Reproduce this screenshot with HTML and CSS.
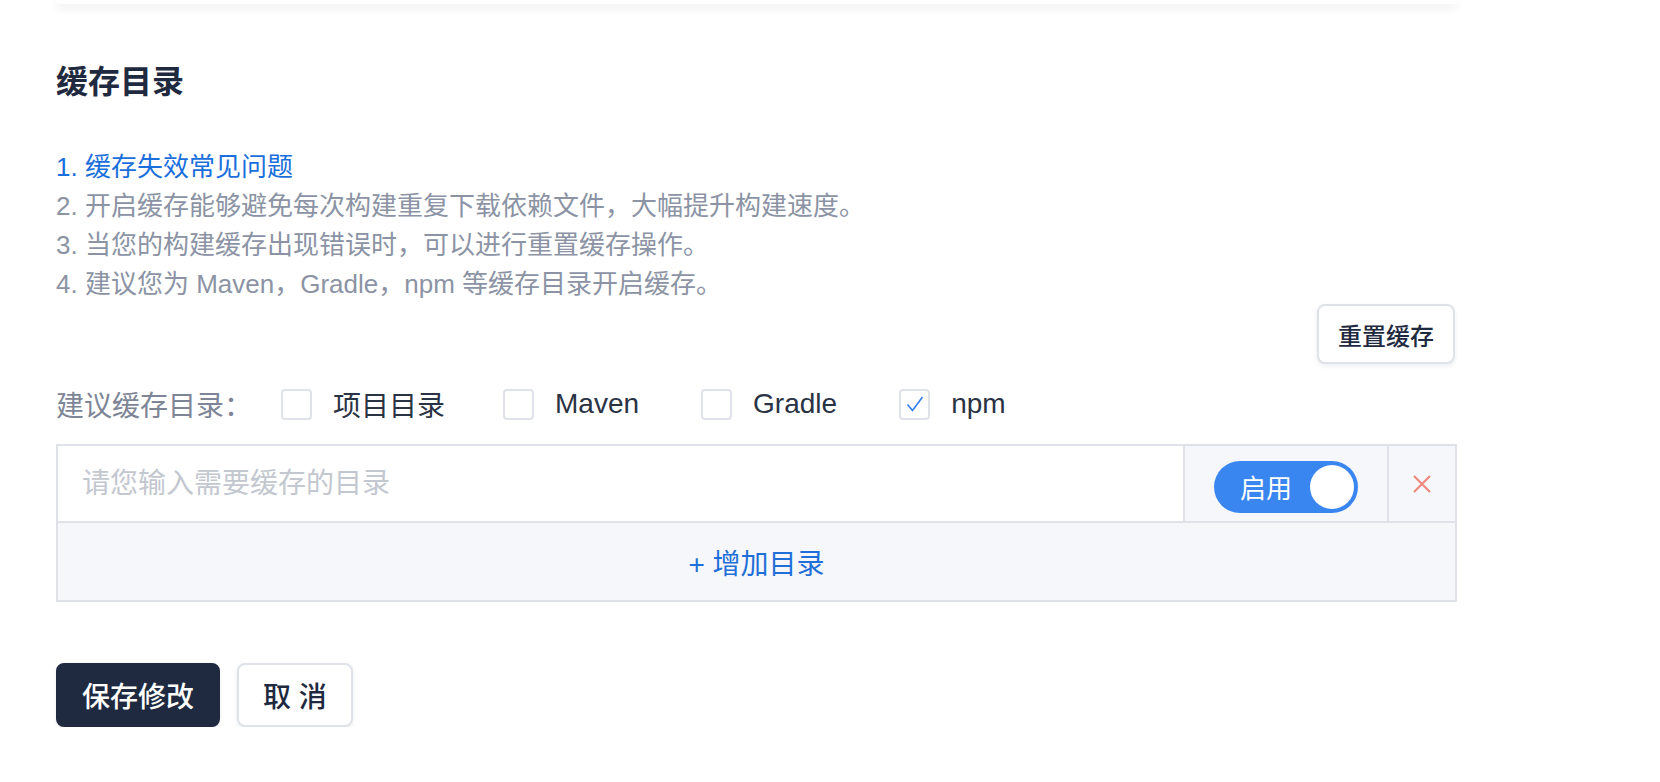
FILE: index.html
```html
<!DOCTYPE html>
<html lang="zh-CN">
<head>
  <meta charset="UTF-8">
  <title>缓存目录</title>
  <link rel="stylesheet" href="styles.css">
</head>
<body>

  <div class="page">
    <div class="top-card"></div>

    <section class="cache">
      <h2 class="section-title">缓存目录</h2>

      <div class="tips">
        <a class="tip tip-link" href="#">1. 缓存失效常见问题</a>
        <div class="tip">2. 开启缓存能够避免每次构建重复下载依赖文件，大幅提升构建速度。</div>
        <div class="tip">3. 当您的构建缓存出现错误时，可以进行重置缓存操作。</div>
        <div class="tip">4. 建议您为 Maven，Gradle，npm 等缓存目录开启缓存。</div>
      </div>

      <div class="reset-row">
        <button class="btn btn-plain btn-small">重置缓存</button>
      </div>

      <div class="suggest">
        <span class="suggest-label">建议缓存目录：</span>
        <label class="check"><span class="box"></span>项目目录</label>
        <label class="check check-wide"><span class="box"></span>Maven</label>
        <label class="check check-wide"><span class="box"></span>Gradle</label>
        <label class="check checked">
          <span class="box">
            <svg width="20" height="18" viewBox="0 0 20 18"><path d="M2.5 9.5 L7.5 15.5 L17.5 2" fill="none" stroke="#2f7ff0" stroke-width="1.6"/></svg>
          </span>npm
        </label>
      </div>

      <div class="dir-table">
        <div class="dir-row">
          <input class="dir-input" type="text" placeholder="请您输入需要缓存的目录">
          <div class="dir-switch">
            <span class="switch on">
              <span class="switch-text">启用</span>
              <span class="knob"></span>
            </span>
          </div>
          <div class="dir-remove">
            <svg width="20" height="20" viewBox="0 0 20 20"><path d="M2 2 L18 18 M18 2 L2 18" stroke="#f08a7e" stroke-width="2.2" fill="none"/></svg>
          </div>
        </div>
        <div class="dir-add">+ 增加目录</div>
      </div>

      <div class="actions">
        <button class="btn btn-primary">保存修改</button>
        <button class="btn btn-plain">取 消</button>
      </div>
    </section>
  </div>

</body>
</html>
```

FILE: styles.css
```css
body {
  margin: 0;
  background-color: #ffffff;
  font-family: "Liberation Sans", "Noto Sans CJK SC", sans-serif;
  color: #1f2a40;
}
.page {
  width: 1401px;
  margin-left: 56px;
}
.top-card {
  height: 4px;
  background-color: #ffffff;
  border-radius: 0 0 6px 6px;
  box-shadow: 0 3px 8px rgba(31, 42, 64, 0.12);
}
.section-title {
  margin: 56px 0 0;
  font-size: 32px;
  line-height: 44px;
  font-weight: 700;
  color: #1f2a40;
}
.tips {
  margin-top: 44px;
  font-size: 26px;
  line-height: 39px;
  color: #8b93a4;
}
.tip {
  display: block;
}
.tip-link {
  color: #1a6fdc;
  text-decoration: none;
}
.reset-row {
  display: flex;
  justify-content: flex-end;
  padding-right: 2px;
}
.btn {
  box-sizing: border-box;
  height: 64px;
  padding: 0 24px;
  border: 2px solid #dfe2e8;
  border-radius: 8px;
  font-family: inherit;
  font-size: 28px;
  font-weight: 500;
  cursor: pointer;
  box-shadow: 0 2px 4px rgba(31, 42, 64, 0.08);
}
.btn-small {
  height: 60px;
  padding: 0 19px;
  font-size: 24px;
}
.btn-plain {
  background-color: #ffffff;
  color: #1f2a40;
}
.btn-primary {
  background-color: #1f2a40;
  border-color: #1f2a40;
  color: #ffffff;
}
.suggest {
  display: flex;
  align-items: center;
  height: 40px;
  margin-top: 20px;
  font-size: 28px;
}
.suggest-label {
  color: #7d8596;
  margin-right: 29px;
}
.check {
  display: flex;
  align-items: center;
  margin-right: 58px;
  color: #2a3344;
}
.check-wide {
  margin-right: 62px;
}
.box {
  box-sizing: border-box;
  display: flex;
  align-items: center;
  justify-content: center;
  width: 31px;
  height: 31px;
  margin-right: 21px;
  border: 2px solid #dfe2e8;
  border-radius: 4px;
  background-color: #ffffff;
}
.dir-table {
  margin-top: 20px;
  border: 2px solid #dfe2e8;
}
.dir-row {
  display: flex;
  height: 75px;
  border-bottom: 2px solid #dfe2e8;
}
.dir-input {
  flex: 1;
  min-width: 0;
  border: none;
  outline: none;
  padding: 0 24px;
  font-family: inherit;
  font-size: 28px;
  color: #1f2a40;
}
.dir-input::placeholder {
  color: #c3c7cf;
}
.dir-switch {
  display: flex;
  align-items: center;
  justify-content: center;
  width: 202px;
  border-left: 2px solid #dfe2e8;
  background-color: #f5f7fa;
}
.switch {
  display: flex;
  align-items: center;
  justify-content: space-between;
  box-sizing: border-box;
  width: 144px;
  height: 52px;
  padding: 0 4px 0 26px;
  border-radius: 26px;
  background-color: #3a86f1;
  margin-top: 6px;
}
.switch-text {
  color: #ffffff;
  font-size: 26px;
}
.knob {
  width: 44px;
  height: 44px;
  border-radius: 50%;
  background-color: #ffffff;
}
.dir-remove {
  display: flex;
  align-items: center;
  justify-content: center;
  width: 66px;
  border-left: 2px solid #dfe2e8;
  background-color: #f5f7fa;
}
.dir-add {
  display: flex;
  align-items: center;
  justify-content: center;
  height: 77px;
  background-color: #f5f7fa;
  font-size: 28px;
  color: #1f6fd8;
  cursor: pointer;
}
.actions {
  display: flex;
  gap: 17px;
  margin-top: 61px;
}
```
